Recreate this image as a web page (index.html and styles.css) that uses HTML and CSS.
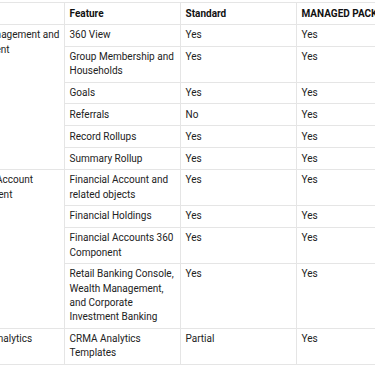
FILE: index.html
```html
<!DOCTYPE html>
<html lang="en">
<head>
<meta charset="utf-8">
<link rel="stylesheet" href="styles.css">
</head>
<body>
<div class="viewport">
  <table class="compare">
    <colgroup>
      <col class="c-area"><col class="c-feat"><col class="c-std"><col class="c-man">
    </colgroup>
    <thead>
      <tr><th>Area</th><th>Feature</th><th>Standard</th><th>MANAGED PACKAGE</th></tr>
    </thead>
    <tbody>
      <tr><td rowspan="6">Client Management and Engagement</td><td>360 View</td><td>Yes</td><td>Yes</td></tr>
      <tr><td>Group Membership and Households</td><td>Yes</td><td>Yes</td></tr>
      <tr><td>Goals</td><td>Yes</td><td>Yes</td></tr>
      <tr><td>Referrals</td><td>No</td><td>Yes</td></tr>
      <tr><td>Record Rollups</td><td>Yes</td><td>Yes</td></tr>
      <tr><td>Summary Rollup</td><td>Yes</td><td>Yes</td></tr>
      <tr><td rowspan="4">Financial Account Management</td><td>Financial Account and related objects</td><td>Yes</td><td>Yes</td></tr>
      <tr><td>Financial Holdings</td><td>Yes</td><td>Yes</td></tr>
      <tr><td>Financial Accounts 360 Component</td><td>Yes</td><td>Yes</td></tr>
      <tr><td>Retail Banking Console, Wealth Management, and Corporate Investment Banking</td><td>Yes</td><td>Yes</td></tr>
      <tr><td>Einstein Analytics</td><td>CRMA Analytics Templates</td><td>Partial</td><td>Yes</td></tr>
    </tbody>
  </table>
</div>
</body>
</html>
```

FILE: styles.css
```css
html, body {
  margin: 0;
  padding: 0;
  background: #ffffff;
}
.viewport {
  width: 375px;
  height: 366px;
  overflow: hidden;
  padding-top: 2px;
  box-sizing: border-box;
}
.compare {
  border-collapse: collapse;
  table-layout: fixed;
  width: 464px;
  margin-left: -52px;
  font-family: Roboto, "Open Sans", sans-serif;
  font-size: 10px;
  line-height: 14.3px;
  color: #222222;
}
.c-area, .c-feat, .c-std, .c-man { width: 116px; }
.compare th,
.compare td {
  border: 1px solid #e5e5e5;
  padding: 3.5px 2px 3px 4.5px;
  text-align: left;
  vertical-align: top;
}
.compare th {
  font-weight: 700;
  color: #111111;
  white-space: nowrap;
}
```
